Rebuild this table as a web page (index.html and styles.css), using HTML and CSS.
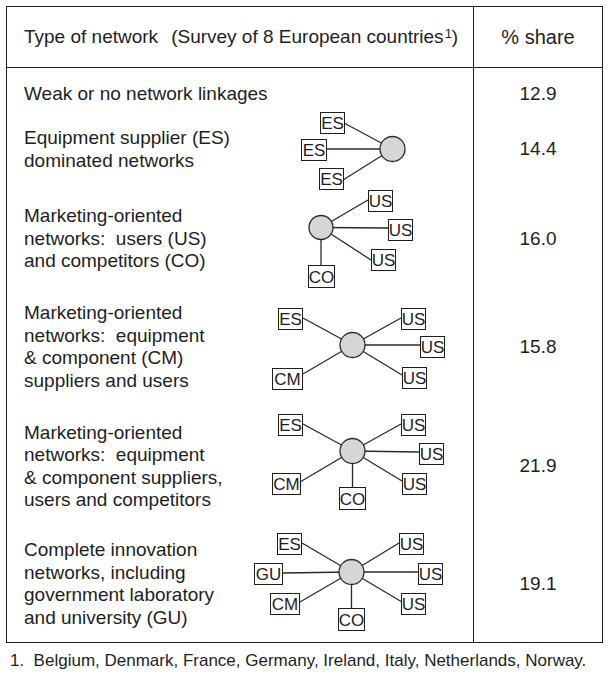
FILE: index.html
```html
<!DOCTYPE html>
<html>
<head>
<meta charset="utf-8">
<link rel="stylesheet" href="styles.css">
</head>
<body>
<div class="table">
  <div class="row head">
    <div class="c1">Type of network<span class="survey">(Survey of 8 European countries<sup>1</sup>)</span></div>
    <div class="c2 share">% share</div>
  </div>

  <div class="row r1">
    <div class="c1"><div class="label wide">Weak or no network linkages</div></div>
    <div class="c2">12.9</div>
  </div>

  <div class="row r2">
    <div class="c1">
      <div class="label">Equipment supplier (ES)<br>dominated networks</div>
      <svg class="net" width="218" height="59" viewBox="254 120 218 59">
        <g class="ln">
          <line x1="344" y1="123" x2="392.5" y2="149"/>
          <line x1="326" y1="149" x2="392.5" y2="149"/>
          <line x1="343" y1="180" x2="392.5" y2="149"/>
        </g>
        <circle class="hub" cx="392.5" cy="149" r="12.5"/>
        <rect class="bx" x="320.5" y="112.5" width="24" height="21"/><text x="332.5" y="129">ES</text>
        <rect class="bx" x="301.5" y="139.5" width="25" height="21"/><text x="314" y="156">ES</text>
        <rect class="bx" x="319.5" y="168.5" width="24" height="21"/><text x="331.5" y="185">ES</text>
      </svg>
    </div>
    <div class="c2">14.4</div>
  </div>

  <div class="row r3">
    <div class="c1">
      <div class="label">Marketing-oriented<br>networks:&nbsp; users (US)<br>and competitors (CO)</div>
      <svg class="net" width="218" height="120" viewBox="254 179 218 120">
        <g class="ln">
          <line x1="321" y1="227.5" x2="368" y2="200"/>
          <line x1="321" y1="227.5" x2="388" y2="228"/>
          <line x1="321" y1="227.5" x2="371" y2="260"/>
          <line x1="321" y1="227.5" x2="321" y2="265"/>
        </g>
        <circle class="hub" cx="321" cy="227.5" r="12"/>
        <rect class="bx" x="368.5" y="190.5" width="24" height="21"/><text x="380.5" y="207">US</text>
        <rect class="bx" x="388.5" y="219.5" width="24" height="21"/><text x="400.5" y="236">US</text>
        <rect class="bx" x="371.5" y="249.5" width="24" height="21"/><text x="383.5" y="266">US</text>
        <rect class="bx" x="308.5" y="265.5" width="26" height="22"/><text x="321.5" y="282.5">CO</text>
      </svg>
    </div>
    <div class="c2">16.0</div>
  </div>

  <div class="row r4">
    <div class="c1">
      <div class="label">Marketing-oriented<br>networks:&nbsp; equipment<br>&amp; component (CM)<br>suppliers and users</div>
      <svg class="net" width="218" height="96" viewBox="254 299 218 96">
        <g class="ln">
          <line x1="303" y1="318" x2="352.5" y2="345"/>
          <line x1="401" y1="318" x2="352.5" y2="345"/>
          <line x1="420" y1="345" x2="352.5" y2="345"/>
          <line x1="303" y1="374" x2="352.5" y2="345"/>
          <line x1="402" y1="375" x2="352.5" y2="345"/>
        </g>
        <circle class="hub" cx="352.5" cy="345" r="12.5"/>
        <rect class="bx" x="278.5" y="308.5" width="24" height="21"/><text x="290.5" y="325">ES</text>
        <rect class="bx" x="401.5" y="308.5" width="24" height="21"/><text x="413.5" y="325">US</text>
        <rect class="bx" x="420.5" y="336.5" width="24" height="21"/><text x="432.5" y="353">US</text>
        <rect class="bx" x="272.5" y="368.5" width="30" height="21"/><text x="287.5" y="385">CM</text>
        <rect class="bx" x="402.5" y="367.5" width="24" height="21"/><text x="414.5" y="384">US</text>
      </svg>
    </div>
    <div class="c2">15.8</div>
  </div>

  <div class="row r5">
    <div class="c1">
      <div class="label">Marketing-oriented<br>networks:&nbsp; equipment<br>&amp; component suppliers,<br>users and competitors</div>
      <svg class="net" width="218" height="143" viewBox="254 395 218 143">
        <g class="ln">
          <line x1="303" y1="424" x2="352.5" y2="451"/>
          <line x1="401" y1="424" x2="352.5" y2="451"/>
          <line x1="419" y1="452" x2="352.5" y2="451"/>
          <line x1="300" y1="482" x2="352.5" y2="451"/>
          <line x1="402" y1="481" x2="352.5" y2="451"/>
          <line x1="352.5" y1="488" x2="352.5" y2="451"/>
        </g>
        <circle class="hub" cx="352.5" cy="451" r="12.5"/>
        <rect class="bx" x="278.5" y="414.5" width="24" height="21"/><text x="290.5" y="431">ES</text>
        <rect class="bx" x="401.5" y="414.5" width="24" height="21"/><text x="413.5" y="431">US</text>
        <rect class="bx" x="419.5" y="443.5" width="24" height="21"/><text x="431.5" y="460">US</text>
        <rect class="bx" x="272.5" y="473.5" width="28" height="21"/><text x="286.5" y="490">CM</text>
        <rect class="bx" x="402.5" y="473.5" width="24" height="21"/><text x="414.5" y="490">US</text>
        <rect class="bx" x="339.5" y="487.5" width="26" height="22"/><text x="352.5" y="504.5">CO</text>
      </svg>
    </div>
    <div class="c2">21.9</div>
  </div>

  <div class="row r6">
    <div class="c1">
      <div class="label">Complete innovation<br>networks, including<br>government laboratory<br>and university (GU)</div>
      <svg class="net" width="218" height="92" viewBox="254 538 218 92">
        <g class="ln">
          <line x1="302" y1="543" x2="351.5" y2="572"/>
          <line x1="283" y1="573" x2="351.5" y2="572"/>
          <line x1="300" y1="602" x2="351.5" y2="572"/>
          <line x1="399" y1="543" x2="351.5" y2="572"/>
          <line x1="418" y1="572" x2="351.5" y2="572"/>
          <line x1="402" y1="602" x2="351.5" y2="572"/>
          <line x1="351.5" y1="609" x2="351.5" y2="572"/>
        </g>
        <circle class="hub" cx="351.5" cy="572" r="12.5"/>
        <rect class="bx" x="277.5" y="533.5" width="24" height="21"/><text x="289.5" y="550">ES</text>
        <rect class="bx" x="254.5" y="563.5" width="28" height="21"/><text x="268.5" y="580">GU</text>
        <rect class="bx" x="270.5" y="593.5" width="29" height="21"/><text x="285" y="610">CM</text>
        <rect class="bx" x="399.5" y="533.5" width="24" height="21"/><text x="411.5" y="550">US</text>
        <rect class="bx" x="418.5" y="563.5" width="24" height="21"/><text x="430.5" y="580">US</text>
        <rect class="bx" x="401.5" y="593.5" width="24" height="21"/><text x="413.5" y="610">US</text>
        <rect class="bx" x="338.5" y="608.5" width="26" height="22"/><text x="351.5" y="625.5">CO</text>
      </svg>
    </div>
    <div class="c2">19.1</div>
  </div>
</div>
<p class="note">1.&nbsp; Belgium, Denmark, France, Germany, Ireland, Italy, Netherlands, Norway.</p>
</body>
</html>
```

FILE: styles.css
```css
html, body {
  margin: 0;
  padding: 0;
  background: #ffffff;
}

body {
  font-family: "Liberation Sans", Arial, sans-serif;
  color: #1e1e1e;
}

.table {
  margin: 6px 0 0 6px;
  width: 597px;
  border: 1px solid #1e1e1e;
  box-sizing: border-box;
}

.row {
  display: flex;
  font-size: 19px;
  line-height: 22.5px;
}

.c1 {
  width: 466px;
  flex: none;
  display: flex;
  align-items: center;
  padding-left: 17px;
  box-sizing: border-box;
}

.c2 {
  flex: 1;
  border-left: 1px solid #1e1e1e;
  display: flex;
  align-items: center;
  justify-content: center;
}

.head {
  height: 61px;
  border-bottom: 1px solid #1e1e1e;
  box-sizing: border-box;
}

.head .c1 {
  white-space: nowrap;
}

.survey {
  margin-left: 13px;
}

.survey sup {
  font-size: 13px;
  line-height: 0;
  vertical-align: 5px;
  margin-left: 1px;
}

.share {
  font-size: 20px;
}

.label {
  width: 230px;
  flex: none;
  white-space: nowrap;
}

.label.wide {
  width: auto;
}

.net {
  display: block;
  flex: none;
  overflow: visible;
}

.ln line {
  stroke: #2a2a2a;
  stroke-width: 1.3;
}

.hub {
  fill: #d6d6d6;
  stroke: #2a2a2a;
  stroke-width: 1.3;
}

.bx {
  fill: #ffffff;
  stroke: #1e1e1e;
  stroke-width: 1;
}

.net text {
  font-family: "Liberation Sans", Arial, sans-serif;
  font-size: 17px;
  fill: #1e1e1e;
  text-anchor: middle;
}

.r1 { height: 52px; }
.r2 { height: 59px; }
.r3 { height: 120px; }
.r4 { height: 96px; }
.r5 { height: 143px; }
.r6 { height: 104px; }

.r6 .c1,
.r6 .c2 {
  padding-bottom: 12px;
}

.note {
  margin: 8px 0 0 10px;
  font-size: 17px;
  line-height: 20px;
  white-space: nowrap;
}
```
